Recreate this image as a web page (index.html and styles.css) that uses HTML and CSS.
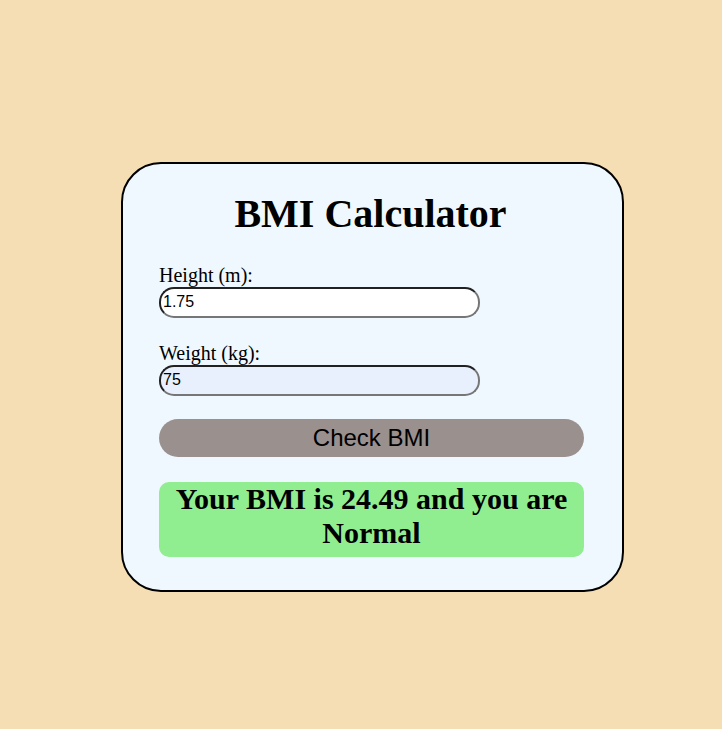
FILE: index.html
```html
<!DOCTYPE html>
<html lang="en">
<head>
<meta charset="utf-8">
<title>BMI Calculator</title>
<link rel="stylesheet" href="styles.css">
</head>
<body>
<div class="card">
  <h1 class="title">BMI Calculator</h1>
  <div class="field">
    <label class="label" for="height">Height (m):</label>
    <input class="input" id="height" type="text" value="1.75">
  </div>
  <div class="field field-last">
    <label class="label" for="weight">Weight (kg):</label>
    <input class="input input-filled" id="weight" type="text" value="75">
  </div>
  <button class="btn" type="button">Check BMI</button>
  <div class="result">Your BMI is 24.49 and you are Normal</div>
</div>
</body>
</html>
```
FILE: styles.css
```css
html, body {
  margin: 0;
  padding: 0;
}
body {
  background: #f5deb3;
  min-height: 100vh;
  box-sizing: border-box;
  padding: 24px 0 0 23px;
  display: flex;
  align-items: center;
  justify-content: center;
  font-family: "Liberation Serif", "Times New Roman", serif;
}
.card {
  box-sizing: border-box;
  width: 503px;
  background: #f0f8ff;
  border: 2px solid #000;
  border-radius: 40px;
  padding: 28px 40px 33px 36px;
  display: flex;
  flex-direction: column;
}
.title {
  margin: 0 0 28px;
  font-size: 40px;
  font-weight: bold;
  text-align: center;
  line-height: 44px;
}
.field {
  display: flex;
  flex-direction: column;
  align-items: flex-start;
  margin-bottom: 24px;
}
.field-last {
  margin-bottom: 23px;
}
.label {
  font-size: 20px;
  line-height: 23px;
}
.input {
  box-sizing: border-box;
  width: 321px;
  height: 31px;
  margin: 0;
  padding: 1px 2px;
  border: 2px inset #767676;
  border-radius: 15px;
  background: #fff;
  font-family: "Liberation Sans", Arial, sans-serif;
  font-size: 16px;
  color: #000;
}
.input-filled {
  background: #e8f0fe;
}
.btn {
  box-sizing: border-box;
  width: 425px;
  height: 38px;
  margin: 0 0 25px;
  padding: 0;
  border: none;
  border-radius: 19px;
  background: #9a918e;
  color: #000;
  font-family: "Liberation Sans", Arial, sans-serif;
  font-size: 24px;
  line-height: 28px;
}
.result {
  box-sizing: border-box;
  width: 425px;
  background: #90ee90;
  border-radius: 10px;
  padding: 0 10px 6px;
  text-align: center;
  font-size: 30px;
  font-weight: bold;
  line-height: 34.5px;
}
```
